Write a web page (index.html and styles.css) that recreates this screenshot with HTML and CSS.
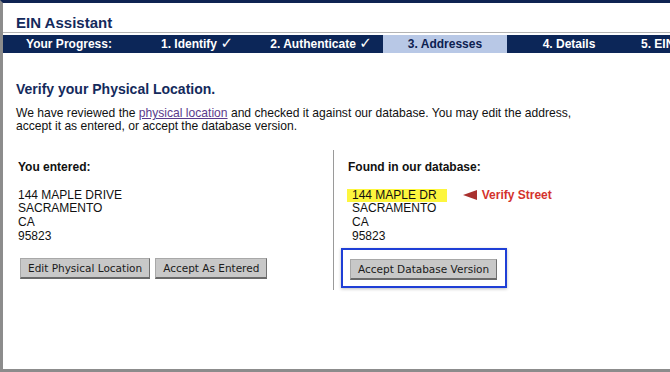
FILE: index.html
```html
<!DOCTYPE html>
<html lang="en">
<head>
    <meta charset="UTF-8">
    <meta name="viewport" content="width=device-width, initial-scale=1.0">
    <title>EIN Assistant</title>
    <link rel="stylesheet" href="styles.css">
</head>
<body>
    <div class="frame">
        <div class="titlebar">
            <h1>EIN Assistant</h1>
        </div>

        <ul class="progress">
            <li class="label">Your Progress:</li>
            <li>1. Identify <span class="check">&#10003;</span></li>
            <li>2. Authenticate <span class="check">&#10003;</span></li>
            <li class="active">3. Addresses</li>
            <li>4. Details</li>
            <li class="last">5. EIN</li>
        </ul>

        <div class="content">
            <h2>Verify your Physical Location.</h2>
            <p class="intro">We have reviewed the <a href="#">physical location</a> and checked it against our database. You may edit the address,<br>accept it as entered, or accept the database version.</p>

            <div class="compare">
                <div class="col entered">
                    <h3>You entered:</h3>
                    <div class="address">
                        144 MAPLE DRIVE<br>
                        SACRAMENTO<br>
                        CA<br>
                        95823
                    </div>
                    <div class="actions">
                        <button>Edit Physical Location</button>
                        <button>Accept As Entered</button>
                    </div>
                </div>

                <div class="col found">
                    <h3>Found in our database:</h3>
                    <div class="address db">
                        <div class="street-row">
                            <span class="highlight">144 MAPLE DR</span>
                            <svg class="arrow" width="14" height="10" viewBox="0 0 14 10"><polygon points="0,5 14,0 14,10" fill="#a9302e"/></svg>
                            <span class="verify">Verify Street</span>
                        </div>
                        SACRAMENTO<br>
                        CA<br>
                        95823
                    </div>
                    <div class="actions boxed">
                        <button>Accept Database Version</button>
                    </div>
                </div>
            </div>
        </div>
    </div>
</body>
</html>
```

FILE: styles.css
```css
html, body {
    margin: 0;
    padding: 0;
    background-color: #ffffff;
    overflow: hidden;
}
body {
    font-family: "Liberation Sans", Arial, sans-serif;
    color: #111111;
}
.frame {
    box-sizing: border-box;
    width: 760px;
    height: 372px;
    border-top: 3px solid #0f2352;
    border-left: 3px solid #8c8c8c;
    border-bottom: 3px solid #8c8c8c;
}
.titlebar {
    height: 18px;
    padding: 11px 0 0 13px;
    border-bottom: 1px solid #b4b4b4;
    margin-bottom: 2px;
}
.titlebar h1 {
    margin: 0;
    font-size: 15px;
    line-height: 18px;
    color: #142a5c;
}
.progress {
    display: flex;
    margin: 0;
    padding: 0;
    list-style: none;
    height: 18px;
    background-color: #0c2658;
}
.progress li {
    flex: none;
    width: 124px;
    text-align: center;
    font-size: 12px;
    font-weight: bold;
    line-height: 18px;
    color: #ffffff;
    white-space: nowrap;
}
.progress .label {
    width: 132px;
}
.progress .active {
    background-color: #b8c8e6;
    color: #0c2050;
}
.progress .last {
    text-align: left;
    padding-left: 10px;
}
.check {
    font-family: "DejaVu Sans", sans-serif;
    font-size: 15px;
    font-weight: bold;
    line-height: 14px;
}
.content {
    padding-left: 13px;
}
.content h2 {
    margin: 28px 0 0;
    font-size: 14px;
    line-height: 16px;
    color: #142a5c;
}
.intro {
    margin: 10px 0 0;
    font-size: 12.1px;
    line-height: 13.4px;
}
.intro a {
    color: #5b3b8c;
}
.compare {
    display: grid;
    grid-template-columns: 317px 1fr;
    margin-top: 16px;
}
.col {
    padding: 11px 0 2px 2px;
}
.col h3 {
    margin: 0;
    font-size: 12px;
    line-height: 13.7px;
}
.address {
    margin-top: 14px;
    font-size: 12px;
    line-height: 13.7px;
}
.found {
    border-left: 1px solid #9a9a9a;
    padding-left: 14px;
}
.address.db {
    padding-left: 4px;
}
.street-row {
    display: flex;
    align-items: center;
}
.highlight {
    background-color: #fdf63e;
    margin-left: -5px;
    padding: 0 10px 0 5px;
}
.arrow {
    margin-left: 16px;
}
.verify {
    margin-left: 5px;
    font-weight: bold;
    color: #d4322c;
}
.actions {
    display: flex;
    gap: 5px;
    margin: 15px 0 0 2px;
}
.actions.boxed {
    display: inline-flex;
    margin: 5px 0 0 -7px;
    padding: 9px 8px 6px 7px;
    border: 2px solid #1f3fd6;
    box-shadow: 0 1px 3px rgba(0, 0, 0, 0.25);
}
button {
    height: 21px;
    padding: 0 7px;
    font-family: "DejaVu Sans", sans-serif;
    font-size: 10.5px;
    color: #1a1a1a;
    background-color: #c8c8c8;
    border: 1px solid #a8a8a8;
    border-right-color: #707070;
    border-bottom: 2px solid #6a6a6a;
    border-radius: 0;
    cursor: pointer;
}
button:hover {
    background-color: #bdbdbd;
}
```
